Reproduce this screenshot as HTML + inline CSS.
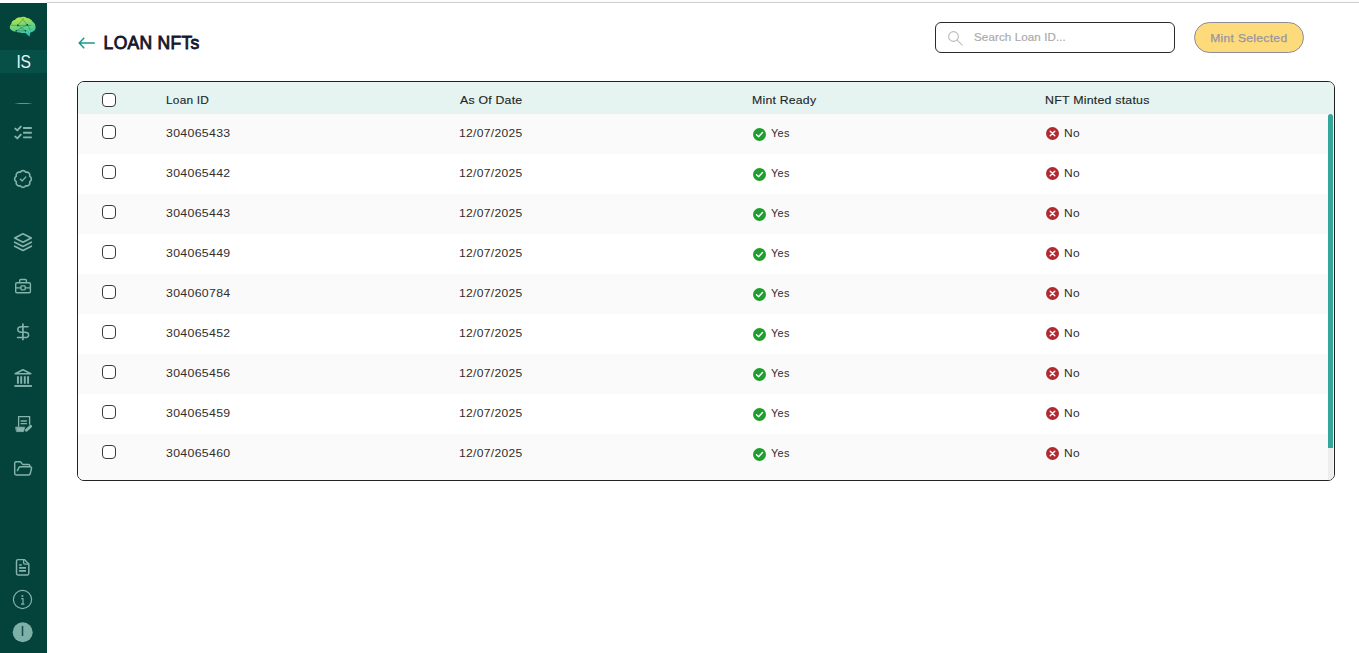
<!DOCTYPE html>
<html lang="en">
<head>
<meta charset="utf-8">
<title>LOAN NFTs</title>
<style>
*{box-sizing:border-box;margin:0;padding:0}
html,body{width:1359px;height:653px;overflow:hidden;background:#fff;font-family:"Liberation Sans",sans-serif;}
body{position:relative}
.topline{position:absolute;left:47px;top:0;width:1312px;height:3px;background:#fdfcfd;border-bottom:1px solid #cfcfcf}
.side{position:absolute;left:0;top:3px;width:47px;height:650px;background:#04433c}
.side .is{position:absolute;left:0;top:47px;width:47px;height:23px;background:#065048;color:#eef6f4;font-size:19px;line-height:23px;text-align:center;letter-spacing:-0.500px}
.side .is span{display:inline-block;transform:scaleX(.820)}
.side .div{position:absolute;left:14px;top:100px;width:19px;height:1px;background:linear-gradient(90deg,rgba(90,150,140,0),#5a968c 30%,#5a968c 70%,rgba(90,150,140,0))}
.ico{position:absolute;left:0;width:47px;display:flex;justify-content:center;align-items:center;height:24px}
.ico svg{display:block}
h1{position:absolute;left:103.600px;top:32.300px;font-size:17.500px;line-height:22px;font-weight:normal;-webkit-text-stroke:.850px #16162d;color:#16162d;letter-spacing:0.300px;white-space:nowrap}
.sideicons{position:absolute;left:0;top:0}
.av{position:absolute;left:12.500px;top:621px;width:20px;height:20px;line-height:20px;text-align:center;font-size:14px;color:#04433c}
.back{position:absolute;left:78.400px;top:37px}
.search{position:absolute;left:935px;top:22px;width:240px;height:31px;border:1.300px solid #2a2a2a;border-radius:6px;background:#fff}
.search svg{position:absolute;left:11px;top:6.800px}
.search span{position:absolute;left:37.600px;top:0;line-height:28px;font-size:11.500px;color:#ababab;white-space:nowrap;letter-spacing:.100px;transform:scaleX(1.008);transform-origin:0 50%;-webkit-text-stroke:.200px #ababab}
.btn{position:absolute;left:1194px;top:22px;width:110px;height:31px;border:1px solid #8f8b97;border-radius:16px;background:#fddb7b;color:#9a94a0;font-size:11.500px;line-height:31px;text-align:center;white-space:nowrap;letter-spacing:.300px;-webkit-text-stroke:.250px #9a94a0}
.btn span{display:inline-block;transform:scaleX(1.050)}
.tbl{position:absolute;left:77px;top:81px;width:1258px;height:400px;border:1px solid #222;border-radius:7px;overflow:hidden;background:#fff}
.hd{position:absolute;left:0;top:0;width:1256px;height:32px;background:#e5f4f1}
.row{position:absolute;left:0;width:1256px;height:40px}
.row.g{background:#fafafa}
.c{position:absolute;top:0;font-size:11.500px;color:#2e2e2e;white-space:nowrap;letter-spacing:0.300px;transform-origin:0 50%}
.hd .c{line-height:36px;color:#1c2626;letter-spacing:0.200px;-webkit-text-stroke:0.120px #1c2626}
.row .c{line-height:38px}
.c1{left:88.400px}.c2{left:381.300px}.c3{left:673.900px}.c4{left:967px}
.hd .c1{transform:scaleX(1.033)}.hd .c2{left:382px;transform:scaleX(1.070)}.hd .c3{transform:scaleX(1.068)}.hd .c4{transform:scaleX(1.077)}
.row .c1{transform:scaleX(1.070)}.row .c2{transform:scaleX(1.050)}.row .c3t{transform:scaleX(.950)}.row .c4t{transform:scaleX(1.040)}
.cb{position:absolute;left:24px;width:14px;height:14px;border:1.3px solid #3a3a3a;border-radius:4px;background:#fff}
.hd .cb{top:10.800px}
.row .cb{top:11px}
.st{position:absolute;top:13px}
.st.y{left:675.300px;top:13.900px}.st.n{left:967.600px;top:13.300px}
.c3t{left:692.800px}.c4t{left:985.600px}
.thumb{position:absolute;left:1249.500px;top:32px;width:5px;height:334px;background:#35a69a;border-radius:2.500px 2.500px 0 0}
.track{position:absolute;left:1249.500px;top:366px;width:5px;height:32px;background:#ededed}
</style>
</head>
<body>
<div class="topline"></div>
<div class="side">
  <div class="is"><span>IS</span></div>
  <div class="div"></div>
</div>
<!--S1-->
<svg class="sideicons" width="47" height="653" viewBox="0 0 47 653" fill="none" stroke="#86b3ab" stroke-width="1.700" stroke-linecap="round" stroke-linejoin="round">
  <defs>
    <linearGradient id="bg1" x1="0.3" y1="0" x2="0.6" y2="1"><stop offset="0" stop-color="#c0e545"/><stop offset="0.5" stop-color="#6cd47c"/><stop offset="0.8" stop-color="#3fc9a0"/><stop offset="1" stop-color="#1fc0c4"/></linearGradient>
  </defs>
  <!-- brain logo -->
  <g stroke="none">
    <path d="M10 28.5c-.6-2 .2-3.600 1.300-4.500 0-2.200 1.700-3.800 3.600-3.900 1.200-2 3.400-2.900 5.600-2.700 2-1 4.600-.8 6.400.5 2.600.1 4.800 1.600 5.800 3.900 1.700 1 2.900 2.900 2.800 5 .4 1.700-.3 3.400-1.700 4.300-1 .9-2.200 1.300-3.500 1.300l-.8 4.300-4-3.800c-1.800.3-3.700.2-5.300-.4-1.500.3-3-.1-4.100-1-1.900.3-3.800-.3-4.900-1.700-.7-.3-1.100-.7-1.200-1.300z" fill="url(#bg1)"/>
    <path d="M11 25.400h20M17.800 25.300l6-7M17.800 25.300l7.700 5.500M16.300 30.800l11-6M27.300 24.800l-5-6M16.300 30.800h9.200M27.300 24.800l3 5" stroke="#0b5a4e" stroke-width=".5" fill="none" opacity=".75"/>
    <circle cx="17.800" cy="25.300" r=".9" fill="#0a4f46"/><circle cx="27.300" cy="24.800" r=".9" fill="#0a4f46"/><circle cx="16.300" cy="30.800" r=".8" fill="#0a4f46"/><circle cx="25.500" cy="30.800" r=".8" fill="#0a4f46"/>
  </g>
  <!-- checklist -->
  <path d="M15.300 128.600l2 1.800 3.500-3.800M15.300 136.600l2 1.800 3.500-3.800" stroke-width="1.900"/>
  <path d="M23.100 128h8.700M23.100 132.800h8.700M23.100 137.400h8.700" stroke-width="1.900" stroke-linecap="butt"/>
  <!-- badge check -->
  <path d="M20.23 172.30A3.11 3.11 0 0 1 25.77 172.30A3.11 3.11 0 0 1 29.70 176.23A3.11 3.11 0 0 1 29.70 181.77A3.11 3.11 0 0 1 25.77 185.70A3.11 3.11 0 0 1 20.23 185.70A3.11 3.11 0 0 1 16.30 181.77A3.11 3.11 0 0 1 16.30 176.23A3.11 3.11 0 0 1 20.23 172.30z" stroke-width="1.600"/>
  <path d="M20.400 179.200l1.800 1.700 3.500-3.800" stroke-width="1.400"/>
  <!-- layers -->
  <path d="M23 233.800l8.300 4.200-8.300 4.300-8.300-4.300z"/>
  <path d="M14.700 242.200l8.300 4.200 8.300-4.200M14.700 246.200l8.300 4.200 8.300-4.200"/>
  <!-- briefcase -->
  <rect x="15.700" y="282.700" width="14.700" height="10" rx="1.200" stroke-width="1.400"/>
  <path d="M19.700 282.500v-2c0-.6.400-1 1-1h4.700c.6 0 1 .4 1 1v2" stroke-width="1.400"/>
  <path d="M15.700 287.800h5M25.400 287.800h5" stroke-width="1.300"/>
  <rect x="20.900" y="285.900" width="4.300" height="3.900" rx=".8" stroke-width="1.300"/>
  <!-- dollar -->
  <path d="M22.900 323.500v16.800" stroke-width="1.700" stroke-linecap="butt"/>
  <path d="M28 326.700h-6.600c-2 0-3.600 1.200-3.600 2.900 0 1.600 1.400 2.700 3.600 2.700h3.300c2.200 0 3.900 1 3.900 2.600 0 1.500-1.600 2.600-3.900 2.600h-7.200" stroke-width="1.500"/>
  <!-- bank -->
  <path d="M15.200 373.700l7.800-3.900 7.800 3.900z" stroke-width="1.600"/>
  <path d="M17.900 376.300v7.500M21.200 376.300v7.500M24.800 376.300v7.500M28.100 376.300v7.500" stroke-width="1.900" stroke-linecap="butt"/>
  <path d="M14.400 386h17.500" stroke-width="1.900" stroke-linecap="butt"/>
  <!-- doc edit -->
  <path d="M18.600 426.800v-10.100h11v8" stroke-width="1.300" stroke-linecap="butt" stroke-linejoin="miter"/>
  <path d="M20.600 421h6.300M20.600 423.600h6.300" stroke-width="1.300" stroke-linecap="butt"/>
  <path d="M15.900 427.200h8.800l-1.200 4.400h-6.600z" fill="#86b3ab" stroke-width=".8"/>
  <path d="M26.400 430.300l4.300-4" stroke-width="2.900"/>
  <!-- folder -->
  <path d="M17.400 470.600l1.500-3c.3-.5.700-.8 1.300-.8h10c.9 0 1.500.8 1.300 1.700l-1.300 5.300c-.2.700-.8 1.200-1.500 1.200h-12.600c-.8 0-1.400-.6-1.400-1.400v-10.400c0-.8.600-1.400 1.400-1.400h3.800c.4 0 .8.200 1 .5l1.300 1.600c.3.300.6.500 1 .5h5.200c.8 0 1.400.6 1.400 1.400v.9" stroke-width="1.450"/>
  <!-- file -->
  <path d="M23.300 559.600h-5.400c-.8 0-1.400.6-1.400 1.400v12.600c0 .8.600 1.400 1.400 1.400h9.500c.8 0 1.400-.6 1.400-1.400v-9.500l-4.500-4.500z" stroke-width="1.450"/>
  <path d="M23.600 559.800v3c0 .8.600 1.400 1.400 1.400h3.400" stroke-width="1.300"/>
  <path d="M19.100 565h2.700M19.100 567.800h6.900M19.100 570.800h6.900" stroke-width="1.700" stroke-linecap="butt"/>
  <!-- info -->
  <circle cx="22.500" cy="599.500" r="9.100" stroke-width="1.200"/>
  <circle cx="22.400" cy="596" r="1" fill="#86b3ab" stroke="none"/>
  <path d="M21.300 598.600h1.700v5.300M21 604.100h3.400" stroke-width="1.200" stroke-linecap="butt"/>
  <!-- avatar -->
  <circle cx="22.700" cy="632.300" r="10" fill="#7fb0a8" stroke="none"/>
</svg>
<!--S2-->
<svg class="back" width="17.300" height="12" viewBox="0 0 18 12" preserveAspectRatio="none" fill="none" stroke="#1b998b" stroke-width="1.6" stroke-linecap="round" stroke-linejoin="round"><path d="M17 6H1.5M6 1.2 1.2 6 6 10.8"/></svg>
<div class="av">I</div>
<h1>LOAN NFTs</h1>
<div class="search"><svg width="16" height="16" viewBox="0 0 16 16" fill="none" stroke="#bcbcbc" stroke-width="1.100"><circle cx="6.500" cy="6.500" r="4.900"/><path d="M10.100 10.100 15.200 15.200" stroke-linecap="round"/></svg><span>Search Loan ID...</span></div>
<div class="btn"><span>Mint Selected</span></div>
<div class="tbl">
  <div class="hd"><div class="cb"></div><div class="c c1">Loan ID</div><div class="c c2">As Of Date</div><div class="c c3">Mint Ready</div><div class="c c4">NFT Minted status</div></div>
  <!--R1-->
  <div class="row g" style="top:32px;height:40px"><div class="cb"></div><div class="c c1">304065433</div><div class="c c2">12/07/2025</div><svg class="st y" width="13" height="13" viewBox="0 0 13 13"><circle cx="6.5" cy="6.5" r="6.5" fill="#1e9e2c"/><path d="M3.5 6.8 5.6 8.8 9.5 4.6" fill="none" stroke="#fff" stroke-width="1.400" stroke-linecap="round" stroke-linejoin="round"/></svg><div class="c c3t">Yes</div><svg class="st n" width="13" height="13" viewBox="0 0 13 13"><circle cx="6.5" cy="6.5" r="6.5" fill="#b5282f"/><path d="M4.200 4.200 8.800 8.800M8.800 4.200 4.200 8.800" fill="none" stroke="#fff" stroke-width="1.350" stroke-linecap="round"/></svg><div class="c c4t">No</div></div>
  <div class="row" style="top:72px;height:40px"><div class="cb"></div><div class="c c1">304065442</div><div class="c c2">12/07/2025</div><svg class="st y" width="13" height="13" viewBox="0 0 13 13"><circle cx="6.5" cy="6.5" r="6.5" fill="#1e9e2c"/><path d="M3.5 6.8 5.6 8.8 9.5 4.6" fill="none" stroke="#fff" stroke-width="1.400" stroke-linecap="round" stroke-linejoin="round"/></svg><div class="c c3t">Yes</div><svg class="st n" width="13" height="13" viewBox="0 0 13 13"><circle cx="6.5" cy="6.5" r="6.5" fill="#b5282f"/><path d="M4.200 4.200 8.800 8.800M8.800 4.200 4.200 8.800" fill="none" stroke="#fff" stroke-width="1.350" stroke-linecap="round"/></svg><div class="c c4t">No</div></div>
  <div class="row g" style="top:112px;height:40px"><div class="cb"></div><div class="c c1">304065443</div><div class="c c2">12/07/2025</div><svg class="st y" width="13" height="13" viewBox="0 0 13 13"><circle cx="6.5" cy="6.5" r="6.5" fill="#1e9e2c"/><path d="M3.5 6.8 5.6 8.8 9.5 4.6" fill="none" stroke="#fff" stroke-width="1.400" stroke-linecap="round" stroke-linejoin="round"/></svg><div class="c c3t">Yes</div><svg class="st n" width="13" height="13" viewBox="0 0 13 13"><circle cx="6.5" cy="6.5" r="6.5" fill="#b5282f"/><path d="M4.200 4.200 8.800 8.800M8.800 4.200 4.200 8.800" fill="none" stroke="#fff" stroke-width="1.350" stroke-linecap="round"/></svg><div class="c c4t">No</div></div>
  <div class="row" style="top:152px;height:40px"><div class="cb"></div><div class="c c1">304065449</div><div class="c c2">12/07/2025</div><svg class="st y" width="13" height="13" viewBox="0 0 13 13"><circle cx="6.5" cy="6.5" r="6.5" fill="#1e9e2c"/><path d="M3.5 6.8 5.6 8.8 9.5 4.6" fill="none" stroke="#fff" stroke-width="1.400" stroke-linecap="round" stroke-linejoin="round"/></svg><div class="c c3t">Yes</div><svg class="st n" width="13" height="13" viewBox="0 0 13 13"><circle cx="6.5" cy="6.5" r="6.5" fill="#b5282f"/><path d="M4.200 4.200 8.800 8.800M8.800 4.200 4.200 8.800" fill="none" stroke="#fff" stroke-width="1.350" stroke-linecap="round"/></svg><div class="c c4t">No</div></div>
  <div class="row g" style="top:192px;height:40px"><div class="cb"></div><div class="c c1">304060784</div><div class="c c2">12/07/2025</div><svg class="st y" width="13" height="13" viewBox="0 0 13 13"><circle cx="6.5" cy="6.5" r="6.5" fill="#1e9e2c"/><path d="M3.5 6.8 5.6 8.8 9.5 4.6" fill="none" stroke="#fff" stroke-width="1.400" stroke-linecap="round" stroke-linejoin="round"/></svg><div class="c c3t">Yes</div><svg class="st n" width="13" height="13" viewBox="0 0 13 13"><circle cx="6.5" cy="6.5" r="6.5" fill="#b5282f"/><path d="M4.200 4.200 8.800 8.800M8.800 4.200 4.200 8.800" fill="none" stroke="#fff" stroke-width="1.350" stroke-linecap="round"/></svg><div class="c c4t">No</div></div>
  <div class="row" style="top:232px;height:40px"><div class="cb"></div><div class="c c1">304065452</div><div class="c c2">12/07/2025</div><svg class="st y" width="13" height="13" viewBox="0 0 13 13"><circle cx="6.5" cy="6.5" r="6.5" fill="#1e9e2c"/><path d="M3.5 6.8 5.6 8.8 9.5 4.6" fill="none" stroke="#fff" stroke-width="1.400" stroke-linecap="round" stroke-linejoin="round"/></svg><div class="c c3t">Yes</div><svg class="st n" width="13" height="13" viewBox="0 0 13 13"><circle cx="6.5" cy="6.5" r="6.5" fill="#b5282f"/><path d="M4.200 4.200 8.800 8.800M8.800 4.200 4.200 8.800" fill="none" stroke="#fff" stroke-width="1.350" stroke-linecap="round"/></svg><div class="c c4t">No</div></div>
  <div class="row g" style="top:272px;height:40px"><div class="cb"></div><div class="c c1">304065456</div><div class="c c2">12/07/2025</div><svg class="st y" width="13" height="13" viewBox="0 0 13 13"><circle cx="6.5" cy="6.5" r="6.5" fill="#1e9e2c"/><path d="M3.5 6.8 5.6 8.8 9.5 4.6" fill="none" stroke="#fff" stroke-width="1.400" stroke-linecap="round" stroke-linejoin="round"/></svg><div class="c c3t">Yes</div><svg class="st n" width="13" height="13" viewBox="0 0 13 13"><circle cx="6.5" cy="6.5" r="6.5" fill="#b5282f"/><path d="M4.200 4.200 8.800 8.800M8.800 4.200 4.200 8.800" fill="none" stroke="#fff" stroke-width="1.350" stroke-linecap="round"/></svg><div class="c c4t">No</div></div>
  <div class="row" style="top:312px;height:40px"><div class="cb"></div><div class="c c1">304065459</div><div class="c c2">12/07/2025</div><svg class="st y" width="13" height="13" viewBox="0 0 13 13"><circle cx="6.5" cy="6.5" r="6.5" fill="#1e9e2c"/><path d="M3.5 6.8 5.6 8.8 9.5 4.6" fill="none" stroke="#fff" stroke-width="1.400" stroke-linecap="round" stroke-linejoin="round"/></svg><div class="c c3t">Yes</div><svg class="st n" width="13" height="13" viewBox="0 0 13 13"><circle cx="6.5" cy="6.5" r="6.5" fill="#b5282f"/><path d="M4.200 4.200 8.800 8.800M8.800 4.200 4.200 8.800" fill="none" stroke="#fff" stroke-width="1.350" stroke-linecap="round"/></svg><div class="c c4t">No</div></div>
  <div class="row g" style="top:352px;height:46px"><div class="cb"></div><div class="c c1">304065460</div><div class="c c2">12/07/2025</div><svg class="st y" width="13" height="13" viewBox="0 0 13 13"><circle cx="6.5" cy="6.5" r="6.5" fill="#1e9e2c"/><path d="M3.5 6.8 5.6 8.8 9.5 4.6" fill="none" stroke="#fff" stroke-width="1.400" stroke-linecap="round" stroke-linejoin="round"/></svg><div class="c c3t">Yes</div><svg class="st n" width="13" height="13" viewBox="0 0 13 13"><circle cx="6.5" cy="6.5" r="6.5" fill="#b5282f"/><path d="M4.200 4.200 8.800 8.800M8.800 4.200 4.200 8.800" fill="none" stroke="#fff" stroke-width="1.350" stroke-linecap="round"/></svg><div class="c c4t">No</div></div>
  <!--R2-->
  <div class="thumb"></div><div class="track"></div>
</div>
</body>
</html>
